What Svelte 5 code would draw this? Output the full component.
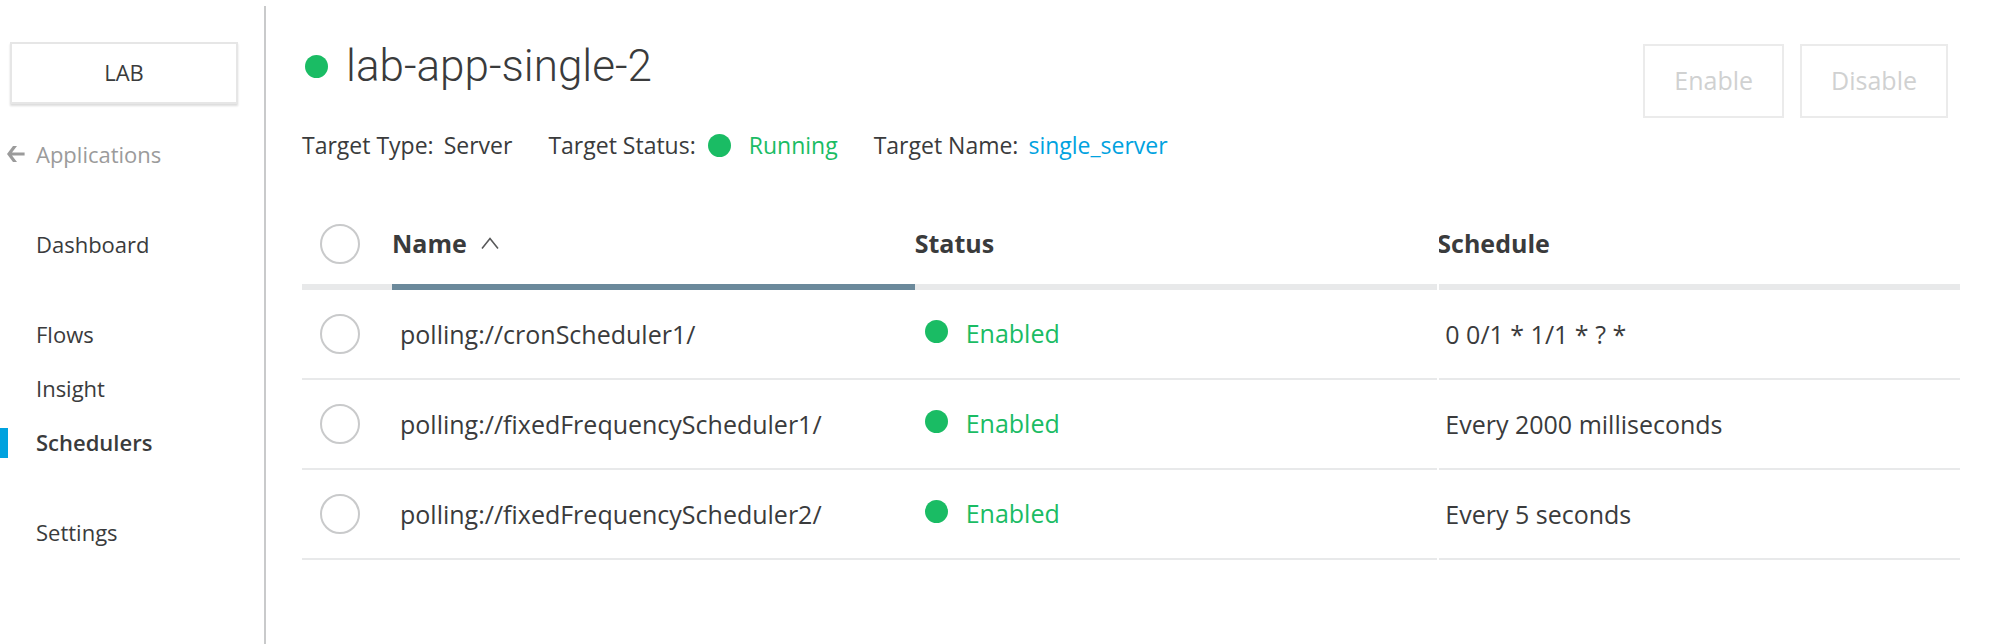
<script>
  const groups = [
    [{ label: 'Dashboard' }],
    [{ label: 'Flows' }, { label: 'Insight' }, { label: 'Schedulers', active: true }],
    [{ label: 'Settings' }]
  ];

  const schedulers = [
    { name: 'polling://cronScheduler1/', status: 'Enabled', schedule: '0 0/1 * 1/1 * ? *' },
    { name: 'polling://fixedFrequencyScheduler1/', status: 'Enabled', schedule: 'Every 2000 milliseconds' },
    { name: 'polling://fixedFrequencyScheduler2/', status: 'Enabled', schedule: 'Every 5 seconds' }
  ];

  let selected = $state(schedulers.map(() => false));
  const allSelected = $derived(selected.every(Boolean));
  const noneSelected = $derived(!selected.some(Boolean));

  function toggleAll() {
    const next = !allSelected;
    selected = selected.map(() => next);
  }
</script>

<div class="layout">
  <aside>
    <button class="environment" type="button">LAB</button>
    <a class="item back" href="#applications">
      <svg width="18" height="16" viewBox="0 0 18 16" aria-hidden="true">
        <path d="M6 0h4L5 6.5h12.6v3H5L10 16H6L0 8z" fill="#9b9b9b" />
      </svg>
      Applications
    </a>
    <nav>
      {#each groups as group}
        <div class="group">
          {#each group as item}
            <a class="item" class:active={item.active} href={'#' + item.label.toLowerCase()}>{item.label}</a>
          {/each}
        </div>
      {/each}
    </nav>
  </aside>

  <main>
    <header>
      <div class="summary">
        <h1><span class="dot"></span>lab-app-single-2</h1>
        <div class="meta">
          <span class="pair"><span>Target Type:</span><span>Server</span></span>
          <span class="pair">
            <span>Target Status:</span>
            <span class="state"><span class="dot"></span>Running</span>
          </span>
          <span class="pair"><span>Target Name:</span><a href="#single_server">single_server</a></span>
        </div>
      </div>
      <div class="actions">
        <button type="button" disabled={noneSelected}>Enable</button>
        <button type="button" disabled={noneSelected}>Disable</button>
      </div>
    </header>

    <table>
      <colgroup>
        <col class="pick" />
        <col />
        <col />
        <col />
      </colgroup>
      <thead>
        <tr>
          <th class="check"><input type="checkbox" aria-label="Select all" checked={allSelected} onchange={toggleAll} /></th>
          <th class="sorted" aria-sort="ascending">
            <span class="sort">
              Name
              <svg width="18" height="12" viewBox="0 0 18 12" aria-hidden="true">
                <path d="M1 11.5L9 1.5L17 11.5" fill="none" stroke="#58595a" stroke-width="1.6" />
              </svg>
            </span>
          </th>
          <th>Status</th>
          <th class="split">Schedule</th>
        </tr>
      </thead>
      <tbody>
        {#each schedulers as row, i}
          <tr>
            <td class="check"><input type="checkbox" aria-label={row.name} bind:checked={selected[i]} /></td>
            <td>{row.name}</td>
            <td class="status"><span class="state"><span class="dot"></span>{row.status}</span></td>
            <td class="split">{row.schedule}</td>
          </tr>
        {/each}
      </tbody>
    </table>
  </main>
</div>

<style>
  :global(body) {
    background: #fff;
  }

  .layout {
    display: flex;
    box-sizing: border-box;
    min-height: 100vh;
    padding-top: 6px;
    font-family: 'Open Sans', 'Noto Sans', sans-serif;
    color: #3a3b3c;
  }

  a {
    color: inherit;
    text-decoration: none;
  }

  button {
    font-family: inherit;
    background: #fff;
  }

  aside {
    flex: none;
    box-sizing: border-box;
    width: 266px;
    padding-top: 36px;
    border-right: 2px solid #c9cacb;
    font-size: 22px;
    line-height: 28px;
  }

  .environment {
    display: block;
    width: 228px;
    height: 62px;
    margin: 0 0 36px 10px;
    padding: 0 0 2px;
    border: 2px solid #e6e6e6;
    box-shadow: 0 2px 2px #dcdcdc;
    font-size: 22px;
    color: inherit;
  }

  .item {
    display: block;
    padding: 0 0 2px 36px;
  }

  .back {
    display: flex;
    align-items: center;
    gap: 11px;
    padding-left: 7px;
    color: #9b9b9b;
  }

  nav {
    display: flex;
    flex-direction: column;
    gap: 60px;
    margin-top: 60px;
  }

  .group {
    display: flex;
    flex-direction: column;
    gap: 24px;
  }

  .active {
    padding-left: 28px;
    border-left: 8px solid #00a2df;
    font-weight: 600;
  }

  main {
    flex: 1;
    min-width: 0;
    padding: 30px 36px 0;
  }

  header {
    display: flex;
    justify-content: space-between;
    padding-bottom: 40px;
  }

  h1 {
    display: flex;
    align-items: center;
    gap: 18px;
    margin: 0;
    padding-left: 3px;
    font-family: Roboto, 'Open Sans', sans-serif;
    font-size: 44px;
    font-weight: 300;
    line-height: 60px;
  }

  .dot {
    flex: none;
    width: 23px;
    height: 23px;
    border-radius: 50%;
    background: #1abc64;
  }

  .meta {
    display: flex;
    gap: 36px;
    margin-top: 30px;
    font-size: 23px;
    line-height: 38px;
  }

  .pair {
    display: flex;
    gap: 10px;
  }

  .state {
    display: flex;
    align-items: center;
    gap: 18px;
    color: #1abc64;
  }

  .meta .state {
    padding-left: 2px;
  }

  .meta a {
    color: #00a2df;
  }

  .actions {
    display: flex;
    align-items: flex-start;
    gap: 16px;
    padding: 8px 12px 0 0;
  }

  .actions button {
    height: 74px;
    padding: 0 29px 2px;
    border: 2px solid #ebebeb;
    font-size: 25px;
    color: #3a3b3c;
  }

  .actions button:disabled {
    color: #d0d1d1;
  }

  table {
    width: 100%;
    table-layout: fixed;
    border-collapse: separate;
    border-spacing: 0;
    font-size: 25px;
    line-height: 36px;
  }

  .pick {
    width: 90px;
  }

  th,
  td {
    box-sizing: border-box;
    text-align: left;
  }

  th {
    height: 86px;
    padding: 0 0 2px;
    border-bottom: 6px solid #e8e9ea;
    font-weight: 700;
  }

  td {
    height: 90px;
    padding: 0 8px;
    border-bottom: 2px solid #e8e9ea;
  }

  .check {
    padding: 0;
  }

  .status {
    padding: 0 10px 2px;
  }

  .status .dot {
    margin-bottom: 4px;
  }

  .sorted {
    border-bottom-color: #6b899b;
  }

  .split {
    position: relative;
  }

  /* Keeps the header bar and row lines apart between the last two columns. */
  .split::after {
    content: '';
    position: absolute;
    top: 0;
    bottom: -6px;
    left: 0;
    width: 2px;
    background: #fff;
  }

  td.split::after {
    bottom: -2px;
  }

  .sort {
    display: flex;
    align-items: center;
    gap: 14px;
  }

  input {
    display: block;
    appearance: none;
    box-sizing: border-box;
    width: 40px;
    height: 40px;
    margin: 0 0 0 18px;
    border: 2px solid #c9cacb;
    border-radius: 50%;
    background: #fff;
  }

  input:checked {
    background: #00a2df;
  }
</style>
